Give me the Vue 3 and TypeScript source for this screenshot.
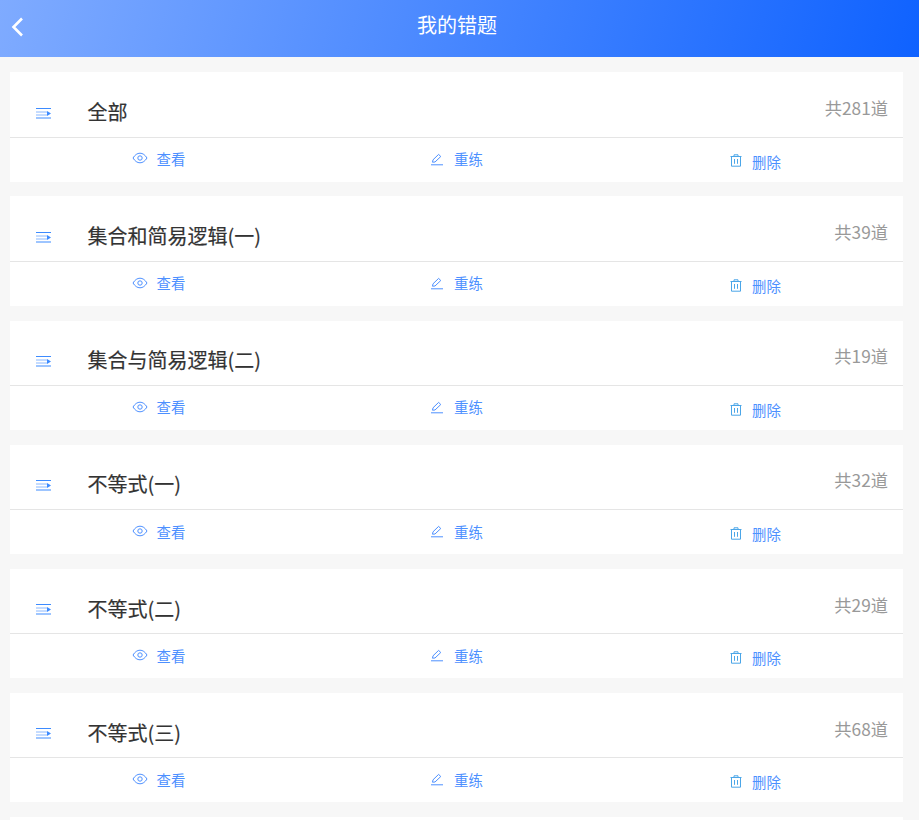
<script setup lang="ts">
interface Item { title: string; count: number }
const items: Item[] = [
  { title: '全部', count: 281 },
  { title: '集合和简易逻辑(一)', count: 39 },
  { title: '集合与简易逻辑(二)', count: 19 },
  { title: '不等式(一)', count: 32 },
  { title: '不等式(二)', count: 29 },
  { title: '不等式(三)', count: 68 },
]
</script>

<template>
  <div class="page">
    <header class="bar">
      <svg class="back" width="14" height="20" viewBox="0 0 14 20" fill="none">
        <path d="M12 1.5 L3.5 10 L12 18.5" stroke="#fff" stroke-width="2.6" />
      </svg>
      <h1>我的错题</h1>
    </header>
    <main class="list">
      <section v-for="item in items" :key="item.title" class="card">
        <div class="top">
          <svg class="menu" width="16" height="12" viewBox="0 0 16 12" fill="none">
            <path d="M0 1.5H15M0 11H15" stroke="#3d8bff" stroke-width="1" />
            <path d="M0 5H11M0 8H11" stroke="#3d8bff" stroke-opacity="0.6" stroke-width="1" />
            <path d="M11 4L15 6.5L11 9Z" fill="#3d8bff" />
          </svg>
          <span class="title">{{ item.title }}</span>
          <span class="count">共{{ item.count }}道</span>
        </div>
        <div class="actions">
          <a class="action">
            <svg width="16" height="12" viewBox="0 0 16 12" fill="none" stroke="#4d90ff" stroke-width="1">
              <path d="M1 6C3 2.8 5.3 1.2 8 1.2S13 2.8 15 6C13 9.2 10.7 10.8 8 10.8S3 9.2 1 6Z" />
              <circle cx="8" cy="6" r="2.2" />
            </svg>
            <span>查看</span>
          </a>
          <a class="action">
            <svg width="14" height="13" viewBox="0 0 14 13" fill="none" stroke="#4d90ff" stroke-width="1">
              <path d="M2.5 9.2L3 6.8L8.6 1.4L10.8 3.5L5 9Z" />
              <path d="M1 11.8H13" />
            </svg>
            <span>重练</span>
          </a>
          <a class="action del">
            <svg width="12" height="13" viewBox="0 0 12 13" fill="none" stroke="#4ba6e8" stroke-width="1">
              <path d="M1.5 2.5H10.5V12.2H1.5ZM0.5 2.5H11.5M4 2.5V0.8H8V2.5M4.5 5V9.8M7.5 5V9.8" />
            </svg>
            <span>删除</span>
          </a>
        </div>
      </section>
      <section class="card"></section>
    </main>
  </div>
</template>

<style>
html, body { margin: 0; background: #f7f7f7; overflow: hidden; }
</style>

<style scoped>
.page {
  height: 820px;
  overflow: hidden;
  background: #f7f7f7;
  font-family: "Noto Sans CJK SC", "Noto Sans", sans-serif;
}
.bar {
  position: relative;
  height: 57px;
  display: flex;
  justify-content: center;
  padding-right: 5px;
  background: linear-gradient(105deg, #7fabff 0%, #0f62ff 100%);
}
.bar h1 {
  margin: 0;
  font-size: 20px;
  font-weight: 400;
  line-height: 49px;
  color: #fff;
}
.back {
  position: absolute;
  left: 10px;
  top: 17px;
}
.list {
  display: flex;
  flex-direction: column;
  gap: 14.6px;
  padding: 15.4px 16px 0 10px;
}
.card {
  height: 109.5px;
  flex: none;
  background: #fff;
}
.top {
  height: 65.6px;
  box-sizing: border-box;
  display: flex;
  border-bottom: 1px solid #e5e5e5;
  padding: 0 15px 0 26px;
}
.menu {
  margin-top: 34.6px;
}
.title {
  margin-left: 35.6px;
  flex: 1;
  font-size: 20px;
  line-height: 29px;
  padding-top: 24.8px;
  color: #333;
  -webkit-text-stroke: 0.2px #333;
}
.count {
  font-size: 17.28px;
  line-height: 26px;
  padding-top: 22.8px;
  color: #999;
}
.actions {
  display: grid;
  grid-template-columns: 299px 299px 1fr;
  padding-left: 121.5px;
}
.action {
  display: flex;
  align-items: center;
  height: 44px;
  font-size: 14.4px;
  color: #4d90ff;
}
.action svg { flex: none; margin-bottom: 3px; }
.action span { margin-left: 9px; line-height: 20px; padding-bottom: 1.5px; }
.action:nth-child(2) span { margin-left: 10px; }
.action:nth-child(2) svg { margin-left: -0.5px; margin-bottom: 1px; }
.action.del { padding-top: 2px; }
.action.del svg { margin-bottom: 2px; }
.action.del span { margin-left: 10.5px; padding-bottom: 0; }
</style>
